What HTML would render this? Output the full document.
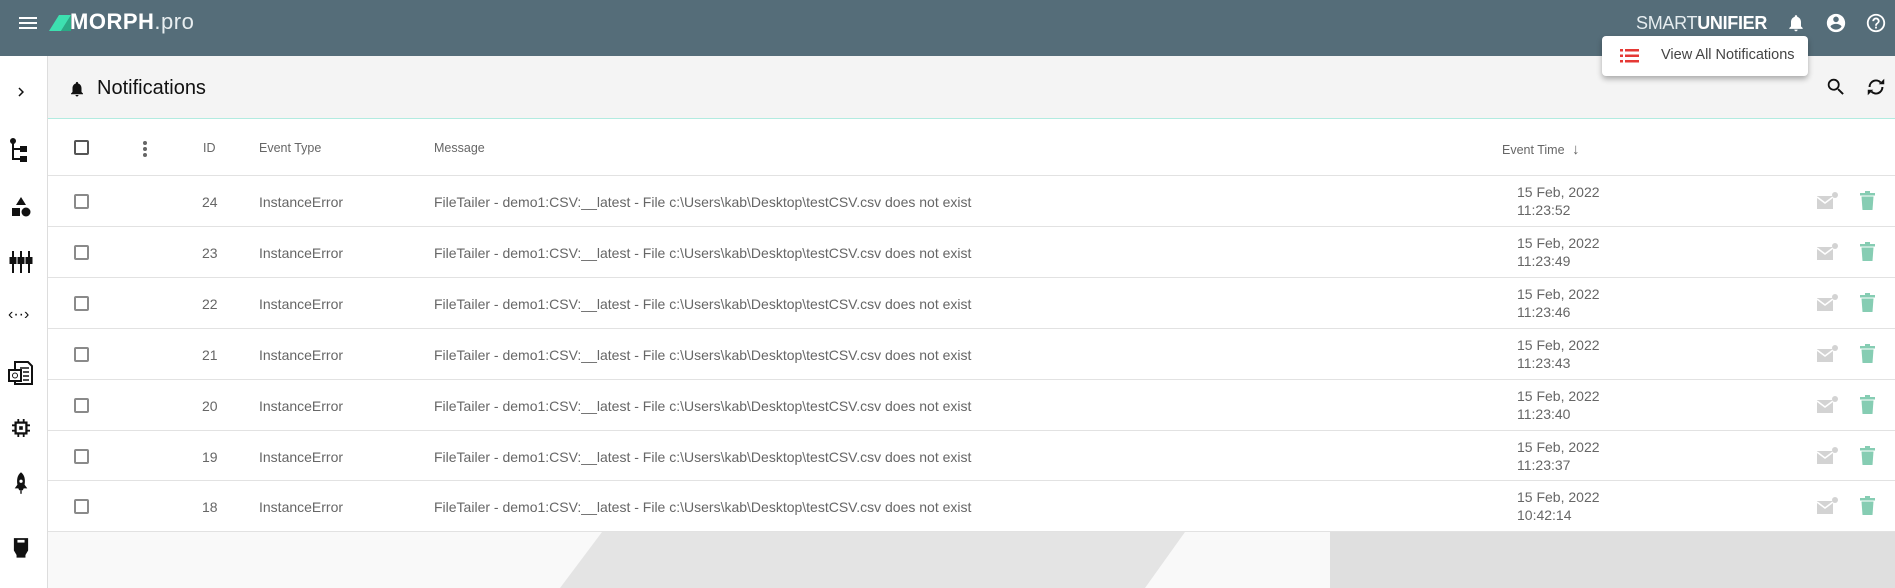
<!DOCTYPE html>
<html><head><meta charset="utf-8"><style>
*{margin:0;padding:0;box-sizing:border-box}
body{width:1895px;height:588px;overflow:hidden;background:#fff;font-family:"Liberation Sans",Arial,sans-serif;position:relative}
.abs{position:absolute}
#hdr{left:0;top:0;width:1895px;height:56px;background:#556d79}
#side{left:0;top:56px;width:48px;height:532px;background:#fff;border-right:1px solid #ddd}
#title{left:48px;top:56px;width:1847px;height:63px;background:#f4f4f4;border-bottom:1px solid #b2ebe0}
.t{position:absolute;white-space:nowrap;color:#666;font-size:14px}
.h{position:absolute;white-space:nowrap;color:#666;font-size:12.5px}
.line{position:absolute;left:48px;width:1847px;height:1px;background:#e2e2e2}
.cb{position:absolute;left:74px;width:15px;height:15px;border:2px solid #8a8a8a;border-radius:2px}
</style></head><body>
<div id="hdr" class="abs">
 <div class="abs" style="left:19px;top:17px;width:18px;height:2px;background:#fff"></div>
 <div class="abs" style="left:19px;top:22px;width:18px;height:2px;background:#fff"></div>
 <div class="abs" style="left:19px;top:27px;width:18px;height:2px;background:#fff"></div>
 <svg class="abs" style="left:49px;top:15px" width="24" height="16"><polygon points="0,16 10,0 22,0 12,16" fill="#3de0b0"/><polygon points="12,16 22,0 22,16" fill="#2aa985"/></svg>
 <div class="abs" style="left:70px;top:9px;color:#fff;font-size:22px;font-weight:bold;letter-spacing:0.5px">MORPH<span style="font-weight:normal;color:#e8eef0">.pro</span></div>
 <div class="abs" style="left:1636px;top:13px;color:#fff;font-size:18px;letter-spacing:-0.3px"><span style="font-weight:300;color:#e6edf0">SMART</span><b>UNIFIER</b></div>
 <svg class="abs" style="left:1786px;top:12px" width="20" height="22" viewBox="0 0 24 24"><path fill="#fff" d="M12 22c1.1 0 2-.9 2-2h-4c0 1.1.9 2 2 2zm6-6v-5c0-3.07-1.64-5.64-4.5-6.32V4c0-.83-.67-1.5-1.5-1.5s-1.5.67-1.5 1.5v.68C7.63 5.360 6 7.920 6 11v5l-2 2v1h16v-1l-2-2z"/></svg>
 <svg class="abs" style="left:1825px;top:12px" width="22" height="22" viewBox="0 0 24 24"><path fill="#fff" d="M12 2C6.48 2 2 6.48 2 12s4.48 10 10 10 10-4.48 10-10S17.52 2 12 2zm0 3c1.66 0 3 1.34 3 3s-1.34 3-3 3-3-1.34-3-3 1.34-3 3-3zm0 14.2c-2.5 0-4.710-1.28-6-3.220.03-1.990 4-3.080 6-3.080 1.990 0 5.970 1.090 6 3.080-1.290 1.940-3.500 3.220-6 3.220z"/></svg>
 <svg class="abs" style="left:1865px;top:12px" width="22" height="22" viewBox="0 0 24 24"><path fill="#fff" d="M11 18h2v-2h-2v2zm1-16C6.48 2 2 6.48 2 12s4.48 10 10 10 10-4.48 10-10S17.52 2 12 2zm0 18c-4.41 0-8-3.59-8-8s3.59-8 8-8 8 3.59 8 8-3.59 8-8 8zm0-14c-2.21 0-4 1.79-4 4h2c0-1.1.9-2 2-2s2 .9 2 2c0 2-3 1.75-3 5h2c0-2.25 3-2.5 3-5 0-2.21-1.79-4-4-4z"/></svg>
</div>
<div id="side" class="abs">
 <svg class="abs" style="left:12px;top:27px" width="18" height="18" viewBox="0 0 24 24"><path fill="#111" d="M8.6 16.6 13.2 12 8.6 7.4 10 6l6 6-6 6z"/></svg>
 <svg class="abs" style="left:9px;top:82px" width="22" height="24" viewBox="0 0 22 24"><circle cx="4" cy="3" r="3" fill="#111"/><path d="M4 3v18h8M4 11h8" stroke="#111" stroke-width="2" fill="none"/><rect x="11" y="8" width="7" height="6" fill="#111"/><rect x="11" y="18" width="7" height="6" fill="#111"/></svg>
 <svg class="abs" style="left:10px;top:140px" width="22" height="22" viewBox="0 0 22 22"><polygon points="11,1 16,9 6,9" fill="#111"/><rect x="2" y="12" width="8" height="8" fill="#111"/><circle cx="16" cy="16" r="4.5" fill="#111"/></svg>
 <svg class="abs" style="left:9px;top:195px" width="24" height="22" viewBox="0 0 24 22"><g fill="#111"><rect x="3" y="0" width="2" height="22"/><rect x="11" y="0" width="2" height="22"/><rect x="19" y="0" width="2" height="22"/><rect x="0.5" y="6" width="7" height="7"/><rect x="8.5" y="6" width="7" height="7"/><rect x="16.5" y="6" width="7" height="7"/></g></svg>
 <div class="abs" style="left:8px;top:250px;font-size:16px;color:#111">‹··›</div>
 <svg class="abs" style="left:8px;top:304px" width="26" height="26" viewBox="0 0 26 26"><path d="M7 2h13l4 4v18H7z" fill="#fff" stroke="#111" stroke-width="2"/><path d="M12 8h9M15 12h6M15 16h6M15 20h6" stroke="#111" stroke-width="1.5"/><rect x="1" y="10" width="12" height="11" fill="#fff" stroke="#111" stroke-width="2"/><circle cx="7" cy="15.5" r="2.5" fill="none" stroke="#111"/></svg>
 <svg class="abs" style="left:12px;top:363px" width="18" height="18" viewBox="0 0 20 20"><rect x="4" y="4" width="12" height="12" fill="none" stroke="#111" stroke-width="2.5"/><rect x="8" y="8" width="4" height="4" fill="#111"/><path d="M7 0v4M13 0v4M7 16v4M13 16v4M0 7h4M0 13h4M16 7h4M16 13h4" stroke="#111" stroke-width="2"/></svg>
 <svg class="abs" style="left:12px;top:416px" width="18" height="22" viewBox="0 0 20 24"><path d="M10 0c4 3 5 8 4 14l3 4h-4l-1 2H8l-1-2H3l3-4C5 8 6 3 10 0z" fill="#111"/><circle cx="10" cy="10" r="1.8" fill="#fff"/><path d="M10 20v4" stroke="#111" stroke-width="1.5"/></svg>
 <svg class="abs" style="left:13px;top:480px" width="16" height="22" viewBox="0 0 18 24"><path d="M1 2h16v14l-3 5v3H4v-3l-3-5z" fill="#111"/><rect x="5" y="4" width="8" height="3" fill="#fff"/></svg>
</div>
<div id="title" class="abs">
 <svg class="abs" style="left:20px;top:23px" width="18" height="20" viewBox="0 0 24 24"><path fill="#111" d="M12 22c1.1 0 2-.9 2-2h-4c0 1.1.9 2 2 2zm6-6v-5c0-3.07-1.64-5.64-4.5-6.32V4c0-.83-.67-1.5-1.5-1.5s-1.5.67-1.5 1.5v.68C7.63 5.36 6 7.92 6 11v5l-2 2v1h16v-1l-2-2z"/></svg>
 <div class="abs" style="left:49px;top:21px;font-size:20px;color:#111">Notifications</div>
 <svg class="abs" style="left:1777px;top:20px" width="22" height="22" viewBox="0 0 24 24"><path fill="#111" d="M15.5 14h-.79l-.28-.27A6.47 6.47 0 0 0 16 9.5 6.5 6.5 0 1 0 9.5 16c1.61 0 3.09-.59 4.23-1.57l.27.28v.79l5 4.99L20.49 19l-4.99-5zm-6 0C7.01 14 5 11.99 5 9.5S7.01 5 9.5 5 14 7.01 14 9.5 11.99 14 9.5 14z"/></svg>
 <svg class="abs" style="left:1817px;top:20px" width="22" height="22" viewBox="0 0 24 24"><path d="M5 12a7 7 0 0 1 12-5M19 12a7 7 0 0 1-12 5" stroke="#111" stroke-width="2.2" fill="none"/><polygon points="15,9 21,9 21,3" fill="#111"/><polygon points="9,15 3,15 3,21" fill="#111"/></svg>
</div>
<div class="abs" style="left:1602px;top:36px;width:206px;height:40px;background:#fff;border-radius:4px;box-shadow:0 3px 6px rgba(0,0,0,.3)">
 <svg class="abs" style="left:18px;top:13px" width="19" height="14" viewBox="0 0 19 14"><g fill="#e53935"><rect x="0" y="0" width="3" height="2.5"/><rect x="5" y="0" width="14" height="2.5"/><rect x="0" y="5.5" width="3" height="2.5"/><rect x="5" y="5.5" width="14" height="2.5"/><rect x="0" y="11" width="3" height="2.5"/><rect x="5" y="11" width="14" height="2.5"/></g></svg>
 <div class="abs" style="left:59px;top:11px;font-size:14.5px;color:#444">View All Notifications</div>
</div>
<div class="cb" style="top:140px;border-color:#555"></div>
<div class="abs" style="left:143px;top:141px;width:4px;height:4px;border-radius:2px;background:#666;box-shadow:0 6px 0 #666,0 12px 0 #666"></div>
<div class="h" style="left:203px;top:141px">ID</div>
<div class="h" style="left:259px;top:141px">Event Type</div>
<div class="h" style="left:434px;top:141px">Message</div>
<div class="h" style="left:1502px;top:141px">Event Time <span style="font-size:15px;margin-left:4px">↓</span></div>
<div class="line" style="top:175px"></div>
<div class="abs" style="left:48px;top:532px;width:1847px;height:56px;background:#f9f9f9"></div>
<svg class="abs" style="left:48px;top:532px" width="1847" height="56"><polygon points="554,0 1137,0 1097,56 512,56" fill="#e4e4e4"/><polygon points="1282,0 1847,0 1847,56 1282,56" fill="#dfdfdf"/></svg>
<div class="line" style="top:531px"></div>
<div id="rows"></div>
<script>
var ids=[24,23,22,21,20,19,18],tm=["11:23:52","11:23:49","11:23:46","11:23:43","11:23:40","11:23:37","10:42:14"],h="";
for(var i=0;i<7;i++){var y=175+i*50.9;
h+='<div class="cb" style="top:'+(y+19)+'px"></div>';
h+='<div class="t" style="left:202px;top:'+(y+19)+'px">'+ids[i]+'</div>';
h+='<div class="t" style="left:259px;top:'+(y+19)+'px">InstanceError</div>';
h+='<div class="t" style="left:434px;top:'+(y+19)+'px">FileTailer - demo1:CSV:__latest - File c:\\Users\\kab\\Desktop\\testCSV.csv does not exist</div>';
h+='<div class="t" style="left:1517px;top:'+(y+8)+'px;line-height:18px">15 Feb, 2022<br>'+tm[i]+'</div>';
h+='<svg class="abs" style="left:1817px;top:'+(y+17)+'px" width="22" height="18" viewBox="0 0 22 18"><path d="M0 4h16v13H0z" fill="#d3d3d3"/><path d="M0 5l8 6 8-6" stroke="#fff" stroke-width="1.6" fill="none"/><circle cx="18" cy="3" r="3" fill="#d3d3d3"/></svg>';
h+='<svg class="abs" style="left:1860px;top:'+(y+16)+'px" width="15" height="19" viewBox="0 0 15 19"><rect x="0" y="2" width="15" height="2.5" fill="#86cdb3"/><rect x="5" y="0" width="5" height="2" fill="#86cdb3"/><path d="M1.5 5.5h12l-1 13.5h-10z" fill="#86cdb3"/></svg>';
if(i<6)h+='<div class="line" style="top:'+Math.round(y+50.9)+'px"></div>';}
document.getElementById("rows").innerHTML=h;
</script>
</body></html>
